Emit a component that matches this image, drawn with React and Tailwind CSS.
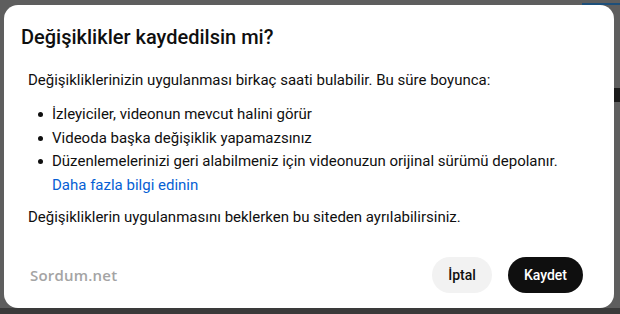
export default function App() {
  return (
    <div className="w-[620px] h-[314px] bg-[#5e5e5e] relative overflow-hidden" style={{ fontFamily: 'Roboto, "Liberation Sans", sans-serif' }}>
      <div className="absolute left-[582px] top-[3px] w-[38px] h-[2px] bg-[#1d4f7a]" />
      <div className="absolute left-0 top-[308px] w-[620px] h-[6px] bg-[#3a3a3a]" />
      <div className="absolute left-[614px] top-[88px] w-[6px] h-[14px] bg-[#1a1a1a]" />
      <div className="relative ml-[4px] pt-[5px]">
        <div className="w-[610px] h-[303px] bg-white rounded-[14px] flex flex-col">
          <h2 className="pl-[17px] pt-[18px] text-[20px] leading-[28px] font-medium text-[#0f0f0f]">
            Değişiklikler kaydedilsin mi?
          </h2>
          <div className="pl-[24px] text-[15px] leading-[20px] text-[#0f0f0f]">
            <p className="mt-[19px]">
              Değişikliklerinizin uygulanması birkaç saati bulabilir. Bu süre boyunca:
            </p>
            <ul className="mt-[14px] flex flex-col">
              <li className="flex items-start h-[24px]">
                <span className="w-[24px] pl-[10px] flex items-center h-[20px]"><span className="w-[5px] h-[5px] rounded-full bg-[#0f0f0f]" /></span>
                <span>İzleyiciler, videonun mevcut halini görür</span>
              </li>
              <li className="flex items-start h-[23px]">
                <span className="w-[24px] pl-[10px] flex items-center h-[20px]"><span className="w-[5px] h-[5px] rounded-full bg-[#0f0f0f]" /></span>
                <span>Videoda başka değişiklik yapamazsınız</span>
              </li>
              <li className="flex items-start">
                <span className="w-[24px] pl-[10px] flex items-center h-[20px]"><span className="w-[5px] h-[5px] rounded-full bg-[#0f0f0f]" /></span>
                <span className="flex flex-col gap-[4px]">
                  <span>Düzenlemelerinizi geri alabilmeniz için videonuzun orijinal sürümü depolanır.</span>
                  <a className="text-[#065fd4]">Daha fazla bilgi edinin</a>
                </span>
              </li>
            </ul>
            <p className="mt-[12px]">Değişikliklerin uygulanmasını beklerken bu siteden ayrılabilirsiniz.</p>
          </div>
          <div className="mt-auto mb-[15px] flex items-center pl-[26px] pr-[31px]">
            <span className="text-[15px] font-semibold text-[#a4a4a4] tracking-[0.2px]" style={{ fontFamily: '"Open Sans", sans-serif' }}>Sordum.net</span>
            <div className="ml-auto flex items-center gap-[16px]">
              <button className="h-[36px] px-[16px] rounded-full bg-[#f2f2f2] text-[14px] font-medium text-[#0f0f0f]">İptal</button>
              <button className="h-[36px] px-[16px] rounded-full bg-[#0f0f0f] text-[14px] font-medium text-white">Kaydet</button>
            </div>
          </div>
        </div>
      </div>
    </div>
  );
}
